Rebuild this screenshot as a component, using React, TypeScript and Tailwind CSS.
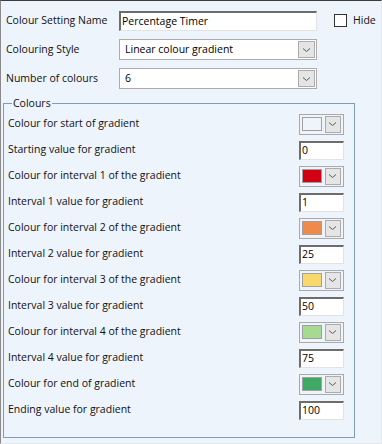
import React from "react";

const Chevron = () => (
  <svg width="9" height="6" viewBox="0 0 9 6" className="block">
    <path d="M1 1.5 L4.5 4.5 L8 1.5" fill="none" stroke="#5a5a5a" strokeWidth="1" />
  </svg>
);

const DropBtn = ({ h = 16 }: { h?: number }) => (
  <div
    className="flex w-[17px] items-center justify-center border border-[#acacac] bg-[#e5e5e5]"
    style={{ height: h }}
  >
    <Chevron />
  </div>
);

const TextBox = ({ value, w }: { value: string; w: string }) => (
  <div
    className={`${w} flex h-[19px] items-center border-t-2 border-l-2 border-r border-b border-t-[#6d6d6d] border-l-[#6d6d6d] border-r-[#e3e3e3] border-b-[#e3e3e3] bg-white pl-[1px] leading-none text-black`}
  >
    {value}
  </div>
);

const Combo = ({ value }: { value: string }) => (
  <div className="flex h-[21px] w-[198px] items-center justify-between border border-[#acacac] bg-white pl-[5px] pr-[1px]">
    <span className="leading-none text-black">{value}</span>
    <DropBtn h={17} />
  </div>
);

const ColourPick = ({ color }: { color: string }) => (
  <div className="flex h-[21px] w-[45px] items-center gap-[3px] border border-[#a9a9a9] bg-[#eef4fa] px-[2px]">
    <div className="h-[14px] w-[21px] border border-[#a0a0a0]" style={{ background: color }} />
    <DropBtn h={17} />
  </div>
);

type Row = { label: string; color?: string; value?: string };

const rows: Row[] = [
  { label: "Colour for start of gradient", color: "#eef4fa" },
  { label: "Starting value for gradient", value: "0" },
  { label: "Colour for interval 1 of the gradient", color: "#d10012" },
  { label: "Interval 1 value for gradient", value: "1" },
  { label: "Colour for interval 2 of the gradient", color: "#ef8a4b" },
  { label: "Interval 2 value for gradient", value: "25" },
  { label: "Colour for interval 3 of the gradient", color: "#f7d86c" },
  { label: "Interval 3 value for gradient", value: "50" },
  { label: "Colour for interval 4 of the gradient", color: "#a6da93" },
  { label: "Interval 4 value for gradient", value: "75" },
  { label: "Colour for end of gradient", color: "#3fa963" },
  { label: "Ending value for gradient", value: "100" },
];

export default function App() {
  return (
    <div
      className="h-[444px] w-[382px] overflow-hidden border-t border-l border-r border-b border-t-[#3c3c3c] border-l-[#8a8a8a] border-r-[#e4e8ee] border-b-[#e4e8ee] bg-[#eef4fb] text-[10.5px] text-[#111]"
      style={{ fontFamily: '"Open Sans", "Liberation Sans", Arial, sans-serif' }}
    >
      <div className="flex flex-col gap-[8px] pl-[5px] pt-[9px]">
        <div className="flex h-[21px] items-center">
          <div className="w-[113px]">Colour Setting Name</div>
          <div className="w-[198px]">
            <TextBox value="Percentage Timer" w="w-[198px] h-[20px]" />
          </div>
          <div className="ml-[17px] flex items-center gap-[6px]">
            <div className="h-[13px] w-[13px] border border-[#333] bg-white" />
            <span>Hide</span>
          </div>
        </div>
        <div className="flex h-[21px] items-center">
          <div className="w-[113px]">Colouring Style</div>
          <Combo value="Linear colour gradient" />
        </div>
        <div className="flex h-[21px] items-center">
          <div className="w-[113px]">Number of colours</div>
          <Combo value="6" />
        </div>
      </div>
      <div className="relative ml-[2px] mt-[14px] w-[352px] border border-[#7f9db9] pb-[14px] pl-[4px] pr-[10px] pt-[7px]">
        <span className="absolute left-[8px] top-[-8px] bg-[#eef4fb] px-[1px] leading-[14px]">Colours</span>
        {rows.map((r) => (
          <div key={r.label} className="flex h-[26px] items-center justify-between">
            <span>{r.label}</span>
            {r.color ? <ColourPick color={r.color} /> : <TextBox value={r.value!} w="w-[45px]" />}
          </div>
        ))}
      </div>
    </div>
  );
}
